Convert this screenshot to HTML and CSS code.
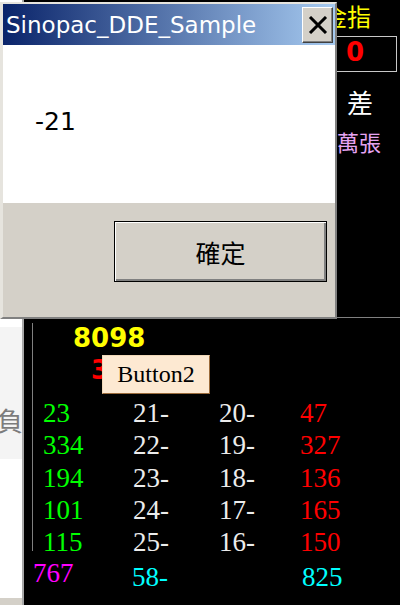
FILE: index.html
```html
<!DOCTYPE html>
<html lang="zh-Hant">
  <head>
    <meta charset="UTF-8" />
    <meta name="viewport" content="width=device-width, initial-scale=1.0" />
    <title>Sinopac_DDE_Sample</title>
    <link rel="stylesheet" href="styles.css">
  </head>
  <body>
    <div class="app">
      <div class="side">
        <div class="side-top"></div>
        <div class="side-gap"></div>
        <div class="side-panel"><span class="side-label">正負</span></div>
        <div class="side-fill"></div>
        <div class="side-foot"></div>
      </div>

      <div class="main">
        <div class="top">
          <div class="labels">
            <div class="gold">金指</div>
            <div class="value-box"><span class="value">0</span></div>
            <div class="diff">差</div>
            <div class="unit">萬張</div>
          </div>
        </div>

        <div class="bottom">
          <div class="panel">
            <div class="price">8098</div>
            <div class="change">3</div>
            <div class="tooltip">Button2</div>

            <div class="rows">
              <span class="g">23</span><span class="w">21-</span><span class="w">20-</span><span class="r">47</span>
              <span class="g">334</span><span class="w">22-</span><span class="w">19-</span><span class="r">327</span>
              <span class="g">194</span><span class="w">23-</span><span class="w">18-</span><span class="r">136</span>
              <span class="g">101</span><span class="w">24-</span><span class="w">17-</span><span class="r">165</span>
              <span class="g">115</span><span class="w">25-</span><span class="w">16-</span><span class="r">150</span>
            </div>
          </div>
          <div class="totals">
            <span class="m">767</span>
            <span class="c">58-</span>
            <span class="c">825</span>
          </div>
        </div>
      </div>
    </div>

    <div class="dialog">
      <div class="titlebar">
        <span class="title">Sinopac_DDE_Sample</span>
        <button class="close" type="button">
          <svg width="20" height="18" viewBox="0 0 20 18">
            <path d="M2 1 L18 17 M18 1 L2 17" stroke="#000" stroke-width="3" fill="none" />
          </svg>
        </button>
      </div>
      <div class="message">-21</div>
      <div class="footer">
        <button class="ok" type="button">確定</button>
      </div>
    </div>
  </body>
</html>
```

FILE: styles.css
```css
body {
  margin: 0;
  width: 400px;
  height: 605px;
  overflow: hidden;
  background-color: #000;
  font-family: "DejaVu Sans", sans-serif;
}
.app {
  display: flex;
  height: 605px;
}

/* left strip of the host window */
.side {
  width: 22px;
  border-right: 2px solid #a8a8a8;
  display: flex;
  flex-direction: column;
  background-color: #fff;
}
.side-top {
  height: 318px;
}
.side-gap {
  height: 9px;
}
.side-panel {
  height: 132px;
  background-color: #f4f4f4;
  overflow: hidden;
  display: flex;
  justify-content: flex-end;
}
.side-label {
  margin-top: 76px;
  margin-right: -1px;
  white-space: nowrap;
  font-family: "Noto Sans CJK TC", sans-serif;
  font-size: 26px;
  line-height: 34px;
  color: #7c7c7c;
}
.side-fill {
  flex: 1;
}
.side-foot {
  height: 7px;
  background-color: #d4d0c8;
}

.main {
  flex: 1;
  display: flex;
  flex-direction: column;
}
.top {
  height: 317px;
  border-bottom: 1px solid #808080;
  display: flex;
  justify-content: flex-end;
}
.labels {
  width: 77px;
  font-family: "Noto Sans CJK TC", sans-serif;
}
.gold {
  color: #ffff00;
  font-size: 24px;
  line-height: 30px;
  margin-top: 1px;
}
.value-box {
  width: 74px;
  height: 36px;
  margin-top: 5px;
  border: 1px solid #c8c8c8;
  padding-left: 22px;
  box-sizing: border-box;
}
.value {
  font-family: "DejaVu Sans", sans-serif;
  font-weight: bold;
  font-size: 26px;
  line-height: 30px;
  color: #ff0000;
}
.diff {
  color: #fff;
  font-size: 26px;
  line-height: 34px;
  padding-left: 24px;
  margin-top: 13px;
}
.unit {
  color: #e6a4f2;
  font-size: 22px;
  line-height: 28px;
  padding-left: 14px;
  margin-top: 8px;
}

/* quote panel */
.bottom {
  flex: 1;
  padding-left: 8px;
}
.panel {
  position: relative;
  margin-top: 2px;
  height: 228px;
  border-left: 1px solid #808080;
}
.price {
  margin-top: 5px;
  padding-left: 40px;
  font-weight: bold;
  font-size: 26px;
  line-height: 30px;
  color: #ffff00;
}
.change {
  margin-top: 2px;
  padding-left: 58px;
  font-weight: bold;
  font-size: 26px;
  line-height: 30px;
  color: #ff0000;
}
.tooltip {
  position: absolute;
  left: 69px;
  top: 32px;
  width: 106px;
  height: 37px;
  background-color: #fde9d2;
  border: 1px solid #f0d8b8;
  border-right-color: #9a6a3a;
  border-bottom-color: #9a6a3a;
  font-family: "Liberation Serif", serif;
  font-size: 24px;
  line-height: 37px;
  text-align: center;
  color: #000;
}
.rows {
  display: grid;
  grid-template-columns: 90px 86px 81px auto;
  margin-top: 12px;
  padding-left: 10px;
  font-family: "Liberation Serif", serif;
  font-size: 27px;
  line-height: 32.3px;
}
.totals {
  display: grid;
  grid-template-columns: 99px 170px auto;
  align-items: start;
  margin-top: 6px;
  padding-left: 1px;
  font-family: "Liberation Serif", serif;
  font-size: 27px;
  line-height: 32px;
}
.totals .c {
  margin-top: 4px;
}
.g { color: #00ff00; }
.w { color: #ececec; }
.r { color: #ff0000; }
.m { color: #ff00ff; }
.c { color: #00ffff; }

/* message box */
.dialog {
  position: absolute;
  left: 0;
  top: 2px;
  width: 332px;
  height: 313px;
  display: flex;
  flex-direction: column;
  background-color: #d4d0c8;
  border-top: 2px solid #e6e4de;
  border-left: 3px solid #e6e4de;
  border-right: 2px solid #808080;
  border-bottom: 2px solid #808080;
}
.titlebar {
  height: 41px;
  display: flex;
  align-items: center;
  justify-content: space-between;
  background: linear-gradient(to right, #0a246a, #a6caf0);
}
.title {
  padding-left: 3px;
  font-size: 23px;
  color: #fff;
  white-space: nowrap;
}
.close {
  width: 31px;
  height: 36px;
  margin-right: 2px;
  margin-top: 1px;
  padding: 0;
  display: flex;
  align-items: center;
  justify-content: center;
  background-color: #d4d0c8;
  border: 1px solid;
  border-color: #fff #404040 #404040 #fff;
  box-shadow: inset -1px -1px #808080;
}
.message {
  height: 158px;
  background-color: #fff;
  padding-left: 32px;
  box-sizing: border-box;
  padding-top: 62px;
  font-size: 25px;
  line-height: 30px;
  color: #000;
}
.footer {
  flex: 1;
  display: flex;
  justify-content: flex-end;
  align-items: flex-start;
  padding: 18px 8px 0 0;
}
.ok {
  width: 213px;
  height: 61px;
  background-color: #d4d0c8;
  border: 1px solid #000;
  box-shadow: inset 1px 1px #fff, inset -2px -2px #808080;
  font-family: "Noto Sans CJK TC", sans-serif;
  font-size: 25px;
  color: #000;
  padding: 0;
}
```
